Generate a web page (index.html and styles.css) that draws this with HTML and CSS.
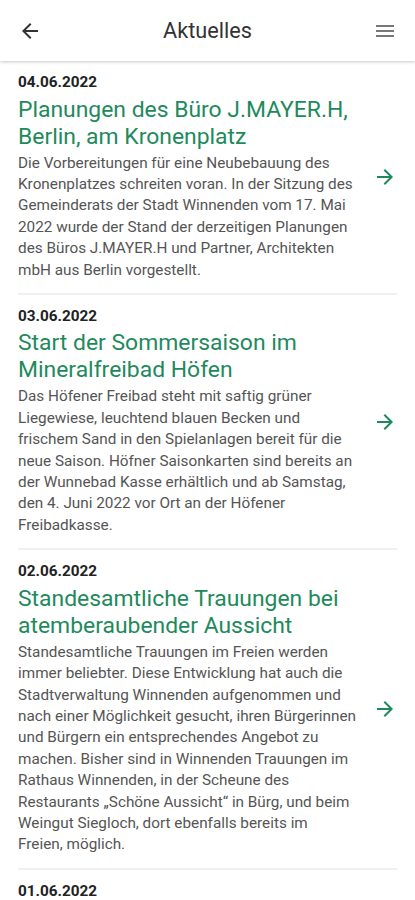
FILE: index.html
```html
<!DOCTYPE html>
<html lang="de">
<head>
    <meta charset="UTF-8">
    <title>Aktuelles</title>
    <meta name="viewport" content="width=device-width, initial-scale=1.0">
    <link rel="stylesheet" href="styles.css">
</head>
<body>

<header class="topbar">
    <button class="icon-btn back" aria-label="Zurück">
        <svg width="24" height="24" viewBox="0 0 24 24"><path d="M20 11H7.83l5.59-5.59L12 4l-8 8 8 8 1.41-1.41L7.83 13H20v-2z" fill="#333"/></svg>
    </button>
    <h1>Aktuelles</h1>
    <button class="icon-btn menu" aria-label="Menü">
        <svg width="24" height="24" viewBox="0 0 24 24"><path d="M3 18h18v-2H3v2zm0-5h18v-2H3v2zm0-7v2h18V6H3z" fill="#777"/></svg>
    </button>
</header>

<main class="news">
    <article class="item">
        <div class="text">
            <div class="date">04.06.2022</div>
            <h2>Planungen des Büro J.MAYER.H, Berlin, am Kronenplatz</h2>
            <p>Die Vorbereitungen für eine Neubebauung des Kronenplatzes schreiten voran. In der Sitzung des Gemeinderats der Stadt Winnenden vom 17. Mai 2022 wurde der Stand der derzeitigen Planungen des Büros J.MAYER.H und Partner, Architekten mbH aus Berlin vorgestellt.</p>
        </div>
        <svg class="go" width="24" height="24" viewBox="0 0 24 24"><path d="M12 4l-1.41 1.41L16.17 11H4v2h12.17l-5.58 5.59L12 20l8-8z"/></svg>
    </article>

    <article class="item">
        <div class="text">
            <div class="date">03.06.2022</div>
            <h2>Start der Sommersaison im Mineralfreibad Höfen</h2>
            <p>Das Höfener Freibad steht mit saftig grüner Liegewiese, leuchtend blauen Becken und frischem Sand in den Spielanlagen bereit für die neue Saison. Höfner Saisonkarten sind bereits an der Wunnebad Kasse erhältlich und ab Samstag, den 4. Juni 2022 vor Ort an der Höfener Freibadkasse.</p>
        </div>
        <svg class="go" width="24" height="24" viewBox="0 0 24 24"><path d="M12 4l-1.41 1.41L16.17 11H4v2h12.17l-5.58 5.59L12 20l8-8z"/></svg>
    </article>

    <article class="item">
        <div class="text">
            <div class="date">02.06.2022</div>
            <h2>Standesamtliche Trauungen bei atemberaubender Aussicht</h2>
            <p>Standesamtliche Trauungen im Freien werden immer beliebter. Diese Entwicklung hat auch die Stadtverwaltung Winnenden aufgenommen und nach einer Möglichkeit gesucht, ihren Bürgerinnen und Bürgern ein entsprechendes Angebot zu machen. Bisher sind in Winnenden Trauungen im Rathaus Winnenden, in der Scheune des Restaurants „Schöne Aussicht“ in Bürg, und beim Weingut Siegloch, dort ebenfalls bereits im Freien,&nbsp;möglich.</p>
        </div>
        <svg class="go" width="24" height="24" viewBox="0 0 24 24"><path d="M12 4l-1.41 1.41L16.17 11H4v2h12.17l-5.58 5.59L12 20l8-8z"/></svg>
    </article>

    <article class="item last">
        <div class="text">
            <div class="date">01.06.2022</div>
        </div>
    </article>
</main>

</body>
</html>
```

FILE: styles.css
```css
body {
    margin: 0;
    padding: 0;
    background: #fff;
    font-family: Roboto, "Noto Sans", sans-serif;
    color: #333;
    overflow: hidden;
}

.topbar {
    height: 61px;
    display: flex;
    align-items: center;
    justify-content: space-between;
    padding: 0 18px;
    background: #fff;
    box-shadow: 0 1px 3px rgba(0, 0, 0, 0.22);
    position: relative;
}

.topbar h1 {
    margin: 0;
    font-size: 21.7px;
    font-weight: 400;
    color: #333;
}

.icon-btn {
    background: none;
    border: none;
    padding: 0;
    width: 24px;
    height: 24px;
    display: flex;
}

.news {
    padding: 0 18px;
}

.item {
    display: flex;
    align-items: center;
    gap: 13px;
    padding: 12px 0;
    border-bottom: 2px solid #f0f0f0;
}

.item.last {
    border-bottom: none;
}

.text {
    flex: 1;
}

.date {
    font-size: 15.3px;
    font-weight: 700;
    line-height: 18px;
    color: #222;
}

.item h2 {
    margin: 4.5px 0 0;
    font-size: 22.9px;
    font-weight: 400;
    line-height: 27px;
    color: #1e8a5c;
}

.item p {
    margin: 3px 0 0;
    font-size: 15.3px;
    line-height: 21.4px;
    color: #555;
}

.go {
    flex: none;
    fill: #1e8a5c;
}
```
